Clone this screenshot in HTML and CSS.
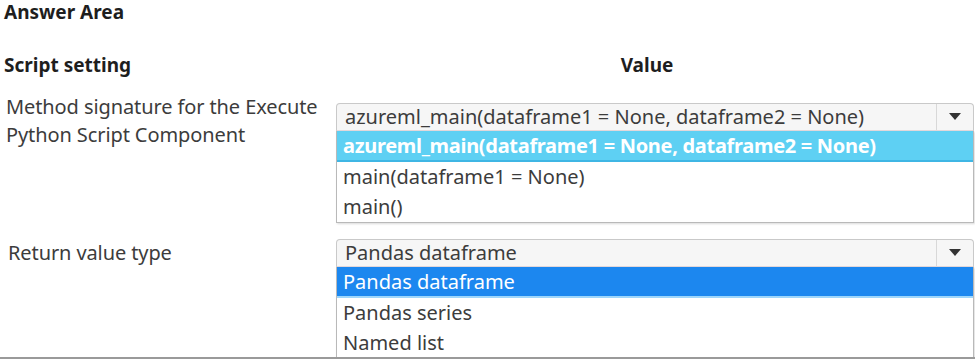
FILE: index.html
```html
<!DOCTYPE html>
<html>
<head>
  <meta charset="utf-8">
  <title>Answer Area</title>
  <link rel="stylesheet" href="styles.css">
</head>
<body>
  <div class="area">
    <h1 class="title">Answer Area</h1>

    <div class="grid">
      <div class="head">Script setting</div>
      <div class="head value">Value</div>

      <div class="label first">Method signature for the Execute<br>Python Script Component</div>
      <div class="dropdown first">
        <div class="select">
          <span class="current">azureml_main(dataframe1 = None, dataframe2 = None)</span>
          <span class="arrow"></span>
        </div>
        <ul class="options">
          <li class="picked light">azureml_main(dataframe1 = None, dataframe2 = None)</li>
          <li>main(dataframe1 = None)</li>
          <li>main()</li>
        </ul>
      </div>

      <div class="label second">Return value type</div>
      <div class="dropdown second">
        <div class="select">
          <span class="current">Pandas dataframe</span>
          <span class="arrow"></span>
        </div>
        <ul class="options">
          <li class="picked dark">Pandas dataframe</li>
          <li>Pandas series</li>
          <li>Named list</li>
        </ul>
      </div>
    </div>
  </div>
</body>
</html>
```

FILE: styles.css
```css
html, body {
    margin: 0;
    padding: 0;
    background: #fff;
}
body {
    font-family: "Noto Sans", "Open Sans", sans-serif;
    color: #3c3c3c;
    width: 975px;
    height: 359px;
    overflow: hidden;
    border-bottom: 2px solid #9a9a9a;
    box-sizing: border-box;
}

.area {
    padding: 0 1px 0 4px;
}

.title {
    font-size: 19px;
    font-weight: bold;
    color: #1e1e1e;
    margin: 0;
    line-height: 24px;
}

.grid {
    display: grid;
    grid-template-columns: 332px 638px;
    align-items: start;
    margin-top: 28px;
}

.head {
    font-size: 19px;
    font-weight: bold;
    color: #1e1e1e;
    line-height: 26px;
}
.head.value {
    text-align: center;
    padding-right: 16px;
}

.label {
    font-size: 20px;
    line-height: 28px;
    padding-left: 2px;
    letter-spacing: -0.1px;
}
.label.first {
    margin-top: 15px;
}
.label.second {
    margin-top: 16px;
    padding-left: 4px;
}

.dropdown {
    font-size: 20px;
}
.dropdown.first {
    margin-top: 25px;
}
.dropdown.second {
    margin-top: 16px;
}

.select {
    display: flex;
    height: 26px;
    border: 1px solid #c9c9c9;
    border-bottom-color: #e4d9dc;
    border-radius: 4px 4px 0 0;
    background: #f6f6f6;
}
.current {
    flex: 1;
    line-height: 26px;
    padding-left: 8px;
    white-space: nowrap;
    overflow: hidden;
}
.arrow {
    width: 36px;
    border-left: 1px solid #d8d8d8;
    position: relative;
}
.arrow::after {
    content: "";
    position: absolute;
    left: 12px;
    top: 9px;
    border-left: 6px solid transparent;
    border-right: 6px solid transparent;
    border-top: 7px solid #333;
}

.options {
    list-style: none;
    margin: 0;
    padding: 0;
    border: 1px solid #b9b9b9;
    border-top: none;
    background: #fff;
    box-shadow: 1px 1px 2px rgba(0, 0, 0, 0.15);
}
.options li {
    height: 30px;
    line-height: 30px;
    padding-left: 6px;
    white-space: nowrap;
}

.picked {
    color: #fff;
}
.picked.light {
    background: #5ed0f3;
    border-bottom: 2px solid #3fb6e4;
    height: 29px;
    line-height: 29px;
    font-weight: bold;
    letter-spacing: -0.3px;
}
.picked.dark {
    background: #1c87ef;
    border-bottom: 2px solid #9ed6fb;
    height: 29px;
    line-height: 30px;
}
```
